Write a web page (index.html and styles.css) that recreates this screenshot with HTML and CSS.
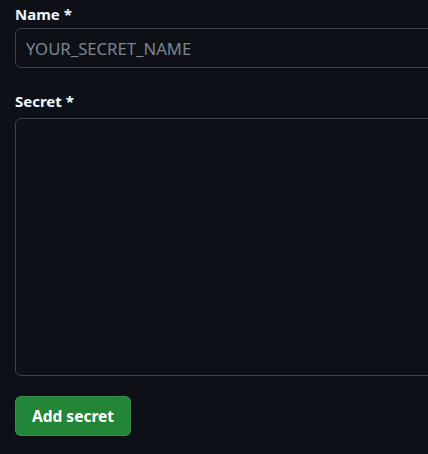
FILE: index.html
```html
<!DOCTYPE html>
<html>
<head>
<meta charset="utf-8">
<link rel="stylesheet" href="styles.css">
</head>
<body>
<form class="form">
  <label class="label label-name" for="name">Name *</label>
  <input class="field input" id="name" type="text" placeholder="YOUR_SECRET_NAME">
  <label class="label label-secret" for="secret">Secret *</label>
  <textarea class="field textarea" id="secret"></textarea>
  <div class="actions">
    <button class="btn" type="button">Add secret</button>
  </div>
</form>
</body>
</html>
```
FILE: styles.css
```css
html, body {
  margin: 0;
  padding: 0;
  background: #0d1117;
  overflow: hidden;
}
body {
  font-family: "Noto Sans", "Open Sans", sans-serif;
  color: #e6edf3;
}
.form {
  display: flex;
  flex-direction: column;
  align-items: flex-start;
  padding: 4px 0 0 15px;
}
.label {
  font-size: 15px;
  font-weight: 700;
  line-height: 21px;
  color: #f0f6fc;
}
.label-name {
  margin-bottom: 3px;
}
.label-secret {
  margin-top: 23px;
  margin-bottom: 6px;
}
.field {
  box-sizing: border-box;
  width: 440px;
  background: #0d1117;
  border: 1px solid #3d444d;
  border-radius: 6px;
  color: #e6edf3;
  font-family: "Noto Sans", "Open Sans", sans-serif;
  outline: none;
  margin: 0;
}
.input {
  height: 40px;
  padding: 0 10px;
  font-size: 16.7px;
}
.input::placeholder {
  color: #7d8590;
}
.textarea {
  height: 258px;
  resize: none;
  display: block;
}
.actions {
  margin-top: 20px;
}
.btn {
  box-sizing: border-box;
  height: 40px;
  width: 116px;
  background: #238636;
  color: #ffffff;
  border: 1px solid rgba(240, 246, 252, 0.1);
  border-radius: 6px;
  font-family: "Noto Sans", "Open Sans", sans-serif;
  font-size: 15.5px;
  font-weight: 700;
  padding: 0;
  white-space: nowrap;
  text-align: center;
}
```
